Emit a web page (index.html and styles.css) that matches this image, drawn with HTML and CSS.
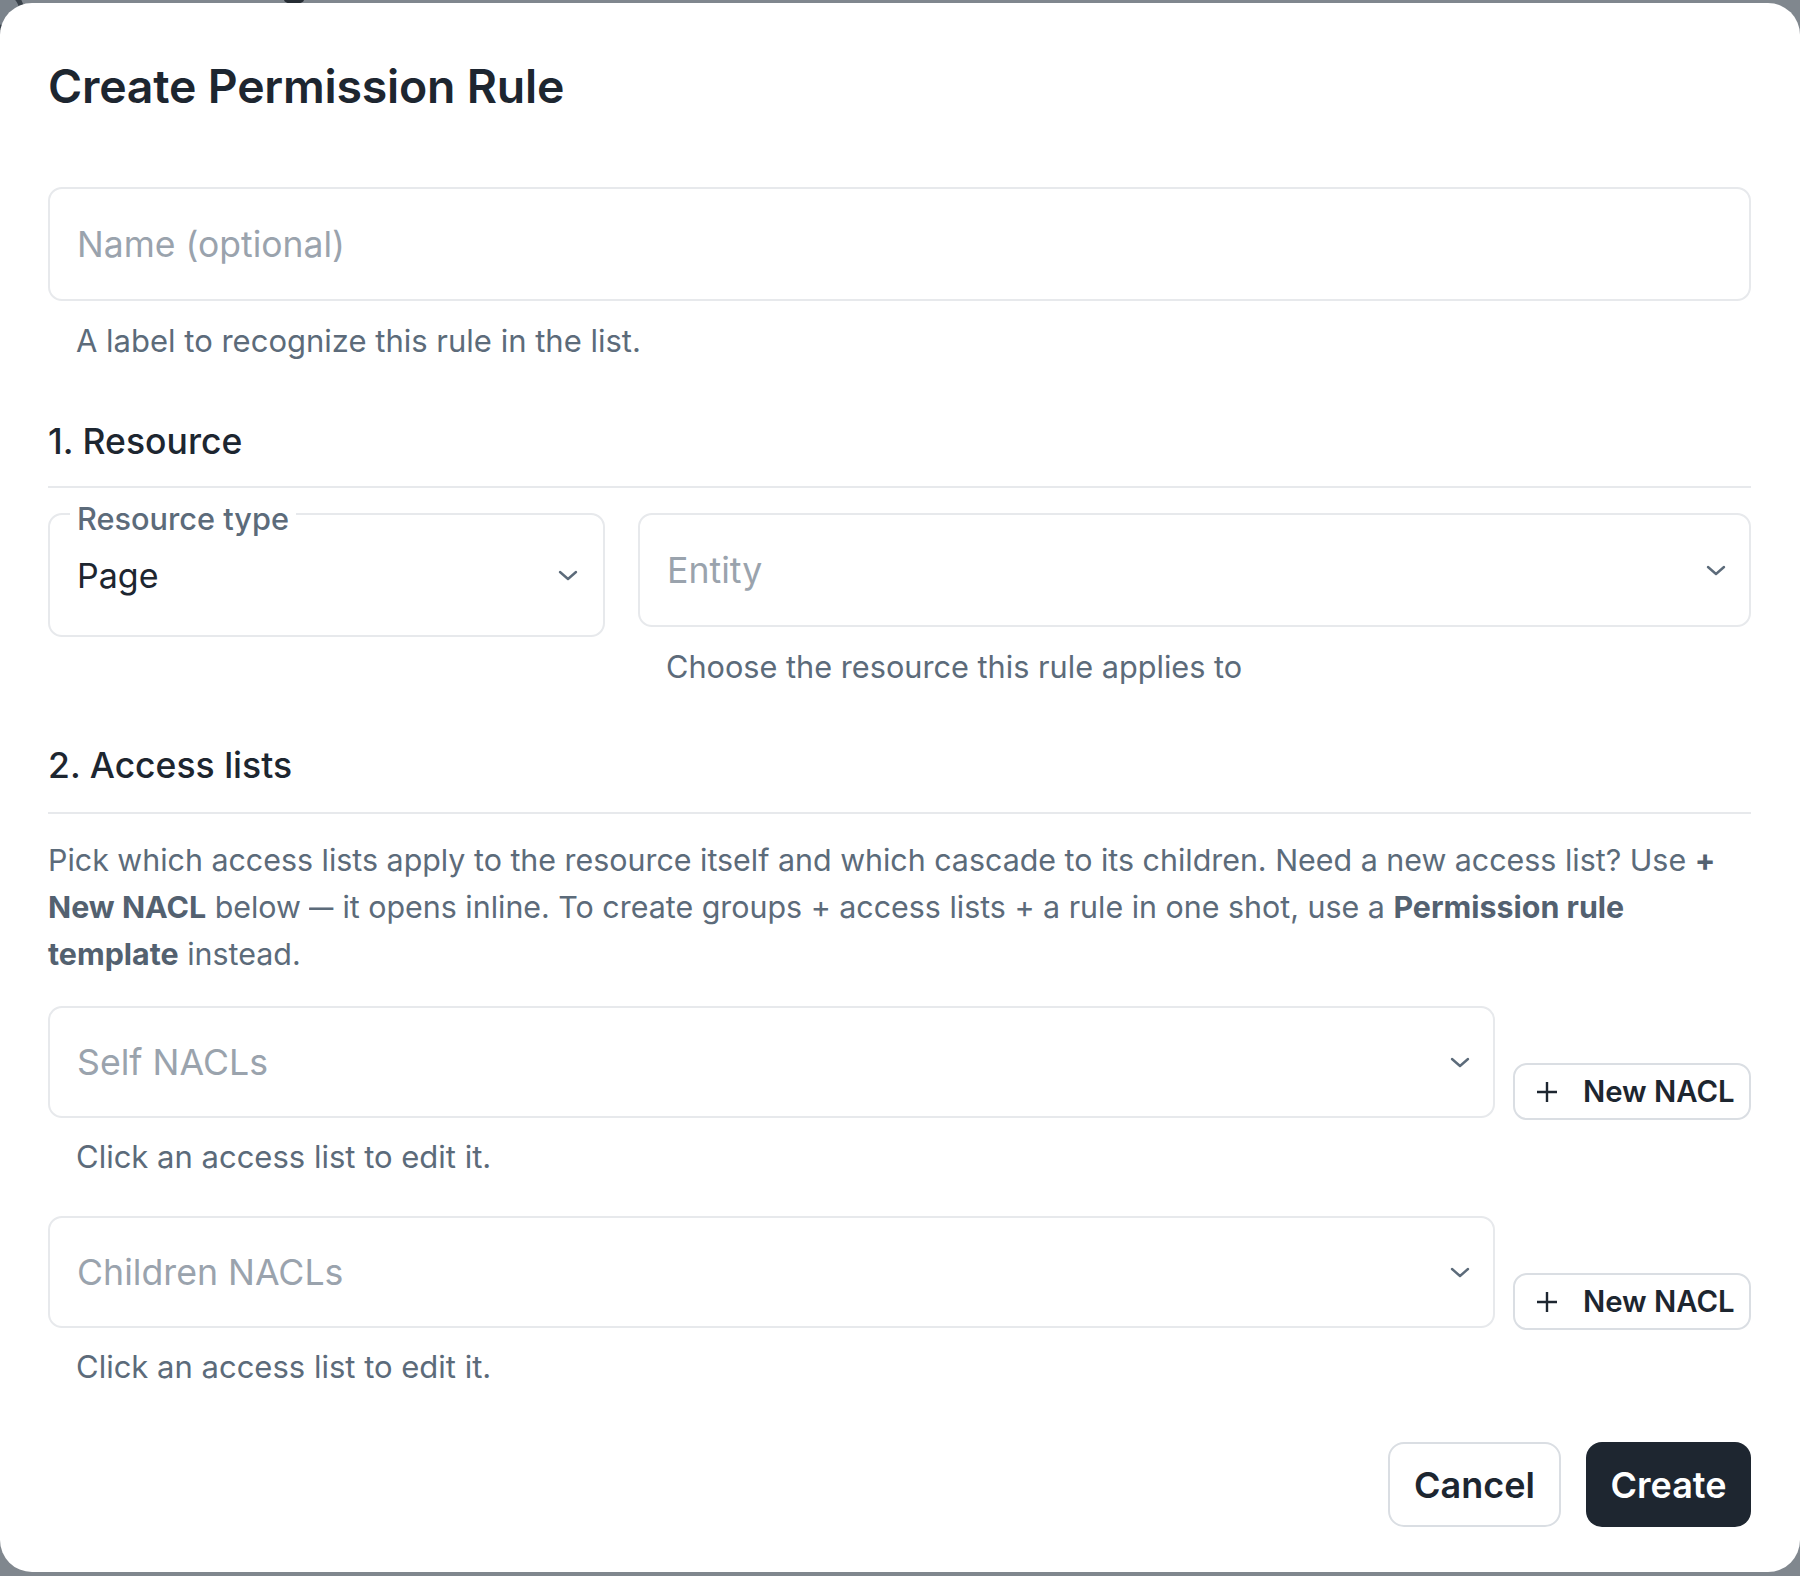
FILE: index.html
```html
<!DOCTYPE html>
<html lang="en">
<head>
<meta charset="utf-8">
<title>Create Permission Rule</title>
<link rel="stylesheet" href="styles.css">
</head>
<body>
<div class="bg-avatar"></div>
<div class="bg-mark"></div>
<div class="modal">
  <h1 class="title">Create Permission Rule</h1>

  <div class="input"><span class="placeholder">Name (optional)</span></div>
  <p class="helper">A label to recognize this rule in the list.</p>

  <h2 class="section">1. Resource</h2>
  <hr class="divider">

  <div class="resource-row">
    <div class="resource-type">
      <div class="select select-tall">
        <span class="float-label">Resource type</span>
        <span class="value">Page</span>
        <svg class="chevron" viewBox="0 0 20 11" aria-hidden="true"><path d="M2 2 L10 9 L18 2"/></svg>
      </div>
    </div>
    <div class="entity">
      <div class="select select-wide">
        <span class="placeholder">Entity</span>
        <svg class="chevron" viewBox="0 0 20 11" aria-hidden="true"><path d="M2 2 L10 9 L18 2"/></svg>
      </div>
      <p class="helper">Choose the resource this rule applies to</p>
    </div>
  </div>

  <h2 class="section section-2">2. Access lists</h2>
  <hr class="divider divider-2">

  <p class="para">Pick which access lists apply to the resource itself and which cascade to its children. Need a new access list? Use <b>+</b><br><b>New NACL</b> below <span class="dash">—</span> it opens inline. To create groups + access lists + a rule in one shot, use a <b>Permission rule</b><br><b>template</b> instead.</p>

  <div class="nacl-row">
    <div class="nacl-field">
      <div class="select select-nacl">
        <span class="placeholder">Self NACLs</span>
        <svg class="chevron" viewBox="0 0 20 11" aria-hidden="true"><path d="M2 2 L10 9 L18 2"/></svg>
      </div>
      <p class="helper helper-nacl">Click an access list to edit it.</p>
    </div>
    <button class="btn-new" type="button">
      <svg class="plus" viewBox="0 0 24 24" aria-hidden="true"><path d="M12 2 V22 M2 12 H22"/></svg>
      <span>New NACL</span>
    </button>
  </div>

  <div class="nacl-row nacl-row-2">
    <div class="nacl-field">
      <div class="select select-nacl">
        <span class="placeholder">Children NACLs</span>
        <svg class="chevron" viewBox="0 0 20 11" aria-hidden="true"><path d="M2 2 L10 9 L18 2"/></svg>
      </div>
      <p class="helper helper-nacl">Click an access list to edit it.</p>
    </div>
    <button class="btn-new" type="button">
      <svg class="plus" viewBox="0 0 24 24" aria-hidden="true"><path d="M12 2 V22 M2 12 H22"/></svg>
      <span>New NACL</span>
    </button>
  </div>

  <div class="footer">
    <button class="btn btn-cancel" type="button">Cancel</button>
    <button class="btn btn-create" type="button">Create</button>
  </div>
</div>
</body>
</html>
```

FILE: styles.css
```css
html, body {
  margin: 0;
  padding: 0;
}
body {
  width: 1800px;
  height: 1576px;
  overflow: hidden;
  background: #80878e;
  font-family: "Inter", "Liberation Sans", sans-serif;
  position: relative;
}
.bg-avatar {
  position: absolute;
  left: -16px;
  top: -10px;
  width: 30px;
  height: 30px;
  border-radius: 50%;
  border: 5px solid #3b434b;
  background: #7b838b;
}
.bg-mark {
  position: absolute;
  left: 284px;
  top: -4px;
  width: 20px;
  height: 8px;
  border-radius: 50%;
  background: #262d34;
}
.modal {
  position: relative;
  z-index: 1;
  width: 1800px;
  height: 1569px;
  margin-top: 3px;
  box-sizing: border-box;
  padding: 56px 49px 0 48px;
  border-radius: 32px;
  background: #ffffff;
  color: #1d2630;
}
.title {
  margin: 0;
  font-size: 46.4px;
  line-height: 54px;
  font-weight: 600;
  color: #1d2630;
  letter-spacing: -0.2px;
}
.input, .select {
  box-sizing: border-box;
  height: 114px;
  border: 2px solid #e7e9ec;
  border-radius: 14px;
  display: flex;
  align-items: center;
  padding: 0 28px 0 27px;
}
.input {
  margin-top: 74px;
}
.placeholder {
  flex: 1;
  font-size: 35.7px;
  color: #9aa3ad;
}
.input .placeholder {
  font-size: 35.5px;
}
.value {
  flex: 1;
  font-size: 34px;
  color: #1d2630;
}
.helper {
  margin: 20px 0 0 28px;
  font-size: 31px;
  line-height: 40px;
  color: #5c6b7a;
}
.entity .helper {
  font-size: 30.7px;
}
.section {
  margin: 59px 0 0 0;
  font-size: 35.5px;
  line-height: 44px;
  font-weight: 500;
  color: #1d2630;
}
.section-2 {
  margin-top: 57px;
}
.divider {
  margin: 22px 0 0 0;
  height: 2px;
  border: 0;
  background: #e7e9ec;
}
.divider-2 {
  margin-top: 24px;
}
.resource-row {
  margin-top: 25px;
  display: flex;
  align-items: flex-start;
  gap: 33px;
}
.resource-type {
  width: 557px;
  flex: none;
}
.entity {
  flex: 1;
}
.select-tall {
  height: 124px;
  position: relative;
  padding-right: 25px;
}
.select-wide {
  padding-right: 23px;
}
.float-label {
  position: absolute;
  left: 20px;
  top: -16px;
  padding: 0 7px;
  background: #ffffff;
  font-size: 30.7px;
  line-height: 40px;
  font-weight: 500;
  color: #5c6b7a;
}
.chevron {
  width: 20px;
  height: 11px;
  flex: none;
  fill: none;
  stroke: #5c6b7a;
  stroke-width: 2.4;
  stroke-linecap: round;
  stroke-linejoin: round;
}
.para {
  margin: 23px 0 0 0;
  font-size: 30.4px;
  line-height: 47px;
  color: #5c6b7a;
}
.para b {
  font-weight: 700;
  color: #536170;
}
.dash {
  display: inline-block;
  transform: scaleX(0.8);
  margin: 0 -3px;
}
.nacl-row {
  margin-top: 28px;
  display: flex;
  align-items: center;
  gap: 18px;
}
.nacl-row-2 {
  margin-top: 39px;
}
.nacl-field {
  flex: 1;
}
.select-nacl {
  height: 112px;
  padding-right: 23px;
}
.helper-nacl {
  margin-top: 19px;
}
.btn-new {
  box-sizing: border-box;
  width: 238px;
  height: 57px;
  flex: none;
  display: flex;
  align-items: center;
  gap: 24px;
  padding: 0 14px 0 20px;
  border: 2px solid #dadee3;
  border-radius: 14px;
  background: #ffffff;
  font-family: inherit;
  font-size: 29.3px;
  font-weight: 600;
  color: #1d2630;
  cursor: pointer;
}
.plus {
  width: 24px;
  height: 24px;
  flex: none;
  fill: none;
  stroke: #1d2630;
  stroke-width: 2.4;
}
.footer {
  margin-top: 55px;
  display: flex;
  justify-content: flex-end;
  gap: 25px;
}
.btn {
  box-sizing: border-box;
  height: 85px;
  border-radius: 16px;
  font-family: inherit;
  font-size: 36px;
  font-weight: 600;
  cursor: pointer;
}
.btn-cancel {
  width: 173px;
  border: 2px solid #dadee3;
  background: #ffffff;
  color: #1d2630;
}
.btn-create {
  width: 165px;
  border: 0;
  background: #1e2630;
  color: #ffffff;
}
```
